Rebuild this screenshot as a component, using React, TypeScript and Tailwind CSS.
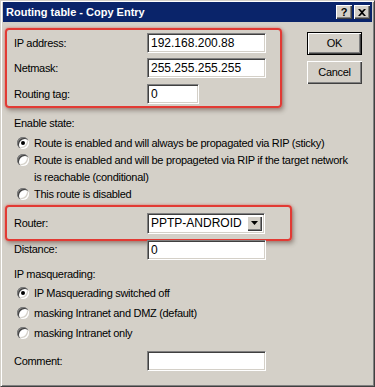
import type { ReactNode } from 'react';

const font = { fontFamily: '"Liberation Sans", Arial, sans-serif' };

const txt = 'text-[11px] tracking-[-0.3px] text-black';

function Field({ w = 'w-[119px]', value = '' }: { w?: string; value?: string }) {
  return (
    <div
      className={`${w} h-[20px] bg-white border border-t-[#808080] border-l-[#808080] border-b-white border-r-white shadow-[inset_1px_1px_0_#404040,inset_-1px_-1px_0_#d4d0c8] px-[3px] text-[12px] leading-[18px] text-black`}
    >
      {value}
    </div>
  );
}

function Row({ label, children, className = '' }: { label: string; children: ReactNode; className?: string }) {
  return (
    <div className={`flex items-center ${className}`}>
      <span className={`w-[133px] shrink-0 ${txt}`}>{label}</span>
      {children}
    </div>
  );
}

function Radio({ checked = false, children, className = '' }: { checked?: boolean; children: ReactNode; className?: string }) {
  return (
    <div className={`flex items-start gap-[5px] ${className}`}>
      <span className="mt-[2px] flex h-[12px] w-[12px] shrink-0 items-center justify-center rounded-full bg-white shadow-[inset_1px_1px_0_#808080,inset_2px_2px_0_#404040,inset_-1px_-1px_0_#ffffff,inset_-2px_-2px_0_#d4d0c8]">
        {checked && <span className="h-[4px] w-[4px] rounded-full bg-black" />}
      </span>
      <span className={`${txt} leading-[17px]`}>{children}</span>
    </div>
  );
}

function Button({ label, primary = false }: { label: string; primary?: boolean }) {
  return (
    <div
      className={`flex h-[23px] w-[55px] items-center justify-center bg-[#d4d0c8] ${txt} ${
        primary
          ? 'border border-black shadow-[inset_1px_1px_0_#ffffff,inset_-1px_-1px_0_#404040,inset_-2px_-2px_0_#808080]'
          : 'shadow-[inset_1px_1px_0_#ffffff,inset_-1px_-1px_0_#404040,inset_-2px_-2px_0_#808080]'
      }`}
    >
      {label}
    </div>
  );
}

const redBox = 'rounded-[4px] border-2 border-[#e23a34] shadow-[2px_3px_4px_rgba(90,80,70,0.45),0_0_3px_rgba(230,60,50,0.6)]';

export default function App() {
  return (
    <div style={font} className="h-[387px] w-[375px] overflow-hidden bg-[#d4d0c8] border border-t-[#d4d0c8] border-l-[#d4d0c8] border-r-[#404040] border-b-[#404040] shadow-[inset_1px_1px_0_#ffffff,inset_-1px_-1px_0_#808080]">
      <div className="mx-[2px] mt-[1px] flex h-[20px] items-center justify-between bg-[#0a246a] pl-[3px] pr-[2px]">
        <span className="text-[11px] font-bold text-white">Routing table - Copy Entry</span>
        <div className="flex gap-[2px]">
          <div className="flex h-[14px] w-[16px] items-center justify-center bg-[#d4d0c8] text-[11px] font-bold leading-none text-black shadow-[inset_1px_1px_0_#ffffff,inset_-1px_-1px_0_#404040,inset_-2px_-2px_0_#808080]">
            ?
          </div>
          <div className="flex h-[14px] w-[16px] items-center justify-center bg-[#d4d0c8] shadow-[inset_1px_1px_0_#ffffff,inset_-1px_-1px_0_#404040,inset_-2px_-2px_0_#808080]">
            <svg width="8" height="7" viewBox="0 0 8 7">
              <path d="M0 0h2l2 2 2-2h2L5 3.5 8 7H6L4 5 2 7H0l3-3.5z" fill="#000" />
            </svg>
          </div>
        </div>
      </div>

      <div className="mt-[6px] flex items-start">
        <div className={`ml-[4px] w-[277px] ${redBox} pl-[7px] pt-[3px] pb-[2px]`}>
          <Row label="IP address:">
            <Field value="192.168.200.88" />
          </Row>
          <Row label="Netmask:" className="mt-[5px]">
            <Field value="255.255.255.255" />
          </Row>
          <Row label="Routing tag:" className="mt-[6px]">
            <Field w="w-[52px]" value="0" />
          </Row>
        </div>
        <div className="ml-[25px] mt-[4px] flex flex-col gap-[6px]">
          <Button label="OK" primary />
          <Button label="Cancel" />
        </div>
      </div>

      <div className="pl-[13px]">
        <div className={`mt-[7px] ${txt}`}>Enable state:</div>
        <div className="mt-[3px] flex flex-col pl-[3px]">
          <Radio checked>Route is enabled and will always be propagated via RIP (sticky)</Radio>
          <Radio>
            Route is enabled and will be propageted via RIP if the target network
            <br />
            is reachable (conditional)
          </Radio>
          <Radio>This route is disabled</Radio>
        </div>
      </div>

      <div className={`ml-[4px] mt-[2px] w-[287px] ${redBox} pl-[7px] pt-[6px] pb-[5px]`}>
        <Row label="Router:">
          <div className="flex h-[21px] w-[118px] items-center justify-between bg-white border border-t-[#808080] border-l-[#808080] border-b-white border-r-white shadow-[inset_1px_1px_0_#404040,inset_-1px_-1px_0_#d4d0c8] pl-[3px] pr-[2px]">
            <span className="text-[12px] text-black">PPTP-ANDROID</span>
            <div className="flex h-[15px] w-[15px] items-center justify-center bg-[#d4d0c8] shadow-[inset_1px_1px_0_#ffffff,inset_-1px_-1px_0_#404040,inset_-2px_-2px_0_#808080]">
              <svg width="7" height="4" viewBox="0 0 7 4">
                <path d="M0 0h7L3.5 4z" fill="#000" />
              </svg>
            </div>
          </div>
        </Row>
      </div>

      <div className="pl-[13px]">
        <Row label="Distance:" className="-mt-px">
          <Field value="0" />
        </Row>
        <div className={`mt-[6px] ${txt}`}>IP masquerading:</div>
        <div className="mt-[3px] flex flex-col gap-[3px] pl-[3px]">
          <Radio checked>IP Masquerading switched off</Radio>
          <Radio>masking Intranet and DMZ (default)</Radio>
          <Radio>masking Intranet only</Radio>
        </div>
        <Row label="Comment:" className="mt-[9px]">
          <Field />
        </Row>
      </div>
    </div>
  );
}
